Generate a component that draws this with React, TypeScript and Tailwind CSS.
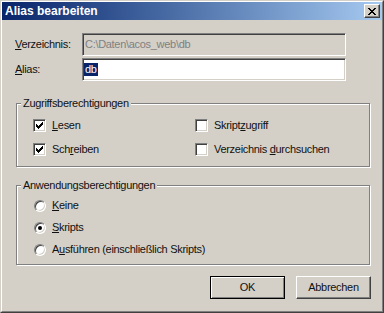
import React from "react";

const font = { fontFamily: '"Liberation Sans", Arial, sans-serif' };

const sunken =
  "border border-t-[#808080] border-l-[#808080] border-b-white border-r-white shadow-[inset_1px_1px_0_#404040,inset_-1px_-1px_0_#d4d0c8]";

function U({ children }: { children: React.ReactNode }) {
  return <span className="underline decoration-1 underline-offset-[1px]">{children}</span>;
}

function Check({ checked }: { checked?: boolean }) {
  const cols = [2, 3, 4, 3, 2, 1, 0];
  return (
    <span className={`w-[13px] h-[13px] bg-white flex items-center justify-center shrink-0 ${sunken}`}>
      {checked && (
        <svg width="7" height="7" viewBox="0 0 7 7" shapeRendering="crispEdges">
          {cols.map((y, x) => (
            <rect key={x} x={x} y={y} width="1" height="3" fill="#000" />
          ))}
        </svg>
      )}
    </span>
  );
}

function Radio({ checked }: { checked?: boolean }) {
  return (
    <span className="w-[12px] h-[12px] rounded-full bg-white flex items-center justify-center shrink-0 border border-t-[#808080] border-l-[#808080] border-b-white border-r-white shadow-[inset_1px_1px_0_#404040,inset_-1px_-1px_0_#d4d0c8]">
      {checked && <span className="w-[4px] h-[4px] rounded-full bg-black" />}
    </span>
  );
}

function CloseGlyph() {
  const rows = [
    [0, 1, 6, 7],
    [1, 2, 5, 6],
    [2, 3, 4, 5],
    [3, 4],
    [2, 3, 4, 5],
    [1, 2, 5, 6],
    [0, 1, 6, 7],
  ];
  return (
    <svg width="8" height="7" viewBox="0 0 8 7" shapeRendering="crispEdges">
      {rows.flatMap((r, y) => r.map((x) => <rect key={`${x}-${y}`} x={x} y={y} width="1" height="1" fill="#000" />))}
    </svg>
  );
}

export default function App() {
  return (
    <div
      className="w-[384px] h-[313px] bg-[#d4d0c8] border border-t-[#d4d0c8] border-l-[#d4d0c8] border-r-[#404040] border-b-[#404040] text-[11px] tracking-[-0.3px] text-[#111]"
      style={font}
    >
      <div className="h-full flex flex-col border border-t-white border-l-white border-r-[#808080] border-b-[#808080]">
        {/* title bar */}
        <div className="h-[18px] shrink-0 flex items-center justify-between bg-linear-to-r from-[#0a246a] to-[#a6caf0] pl-[3px] pr-[2px]">
          <span className="text-white font-bold text-[12px] tracking-[0px] leading-[14px]">Alias bearbeiten</span>
          <span className="w-[16px] h-[14px] bg-[#d4d0c8] flex items-center justify-center border border-t-white border-l-white border-b-[#404040] border-r-[#404040] shadow-[inset_-1px_-1px_0_#808080]">
            <CloseGlyph />
          </span>
        </div>

        {/* content */}
        <div className="flex-1 flex flex-col pl-[14px] pr-[12px] pt-[13px] pb-[12px]">
          <div className="flex flex-col gap-[2px]">
            <div className="flex items-center h-[23px]">
              <span className="w-[66px] -ml-[1px] leading-[13px]">
                <U>V</U>erzeichnis:
              </span>
              <div className={`w-[264px] h-[23px] ml-[1px] flex items-center pl-[2px] bg-[#d4d0c8] text-[#808080] leading-[13px] ${sunken}`}>
                {"C:\\Daten\\acos_web\\db"}
              </div>
            </div>
            <div className="flex items-center h-[23px]">
              <span className="w-[66px] -ml-[1px] leading-[13px]">
                <U>A</U>lias:
              </span>
              <div className={`w-[264px] h-[23px] ml-[1px] flex items-center pl-[1px] bg-white leading-[13px] ${sunken}`}>
                <span className="bg-[#0a246a] text-white px-[1px]">db</span>
              </div>
            </div>
          </div>

          {/* group 1 */}
          <fieldset className="mt-[16px] m-0 p-0 border border-[#808080] shadow-[inset_1px_1px_0_#fff,1px_1px_0_#fff] min-w-0">
            <legend className="ml-[4px] px-[2px] leading-[13px] bg-[#d4d0c8]">Zugriffsberechtigungen</legend>
            <div className="grid grid-cols-[162px_1fr] gap-y-[11px] pt-[9px] pb-[10px] pl-[16px]">
              <label className="flex items-center h-[13px] gap-[6px] leading-[13px]">
                <Check checked />
                <span>
                  <U>L</U>esen
                </span>
              </label>
              <label className="flex items-center h-[13px] gap-[6px] leading-[13px]">
                <Check />
                <span>
                  Skript<U>z</U>ugriff
                </span>
              </label>
              <label className="flex items-center h-[13px] gap-[6px] leading-[13px]">
                <Check checked />
                <span>
                  Sch<U>r</U>eiben
                </span>
              </label>
              <label className="flex items-center h-[13px] gap-[6px] leading-[13px]">
                <Check />
                <span>
                  Verzeichnis <U>d</U>urchsuchen
                </span>
              </label>
            </div>
          </fieldset>

          {/* group 2 */}
          <fieldset className="mt-[12px] m-0 p-0 border border-[#808080] shadow-[inset_1px_1px_0_#fff,1px_1px_0_#fff] min-w-0">
            <legend className="ml-[4px] px-[2px] leading-[13px] bg-[#d4d0c8]">Anwendungsberechtigungen</legend>
            <div className="flex flex-col gap-[9px] pt-[7px] pb-[8px] pl-[17px]">
              <label className="flex items-center h-[13px] gap-[6px] leading-[13px]">
                <Radio />
                <span>
                  <U>K</U>eine
                </span>
              </label>
              <label className="flex items-center h-[13px] gap-[6px] leading-[13px]">
                <Radio checked />
                <span>
                  <U>S</U>kripts
                </span>
              </label>
              <label className="flex items-center h-[13px] gap-[6px] leading-[13px]">
                <Radio />
                <span>
                  A<U>u</U>sführen (einschließlich Skripts)
                </span>
              </label>
            </div>
          </fieldset>

          {/* buttons */}
          <div className="flex justify-end gap-[11px] mt-[11px] -mr-[1px]">
            <button className="w-[75px] h-[23px] bg-[#d4d0c8] border border-black shadow-[inset_1px_1px_0_#fff,inset_-1px_-1px_0_#808080] flex items-center justify-center leading-[13px]">
              OK
            </button>
            <button className="w-[75px] h-[23px] bg-[#d4d0c8] border border-t-white border-l-white border-b-[#404040] border-r-[#404040] shadow-[inset_-1px_-1px_0_#808080] flex items-center justify-center leading-[13px]">
              Abbrechen
            </button>
          </div>
        </div>
      </div>
    </div>
  );
}
